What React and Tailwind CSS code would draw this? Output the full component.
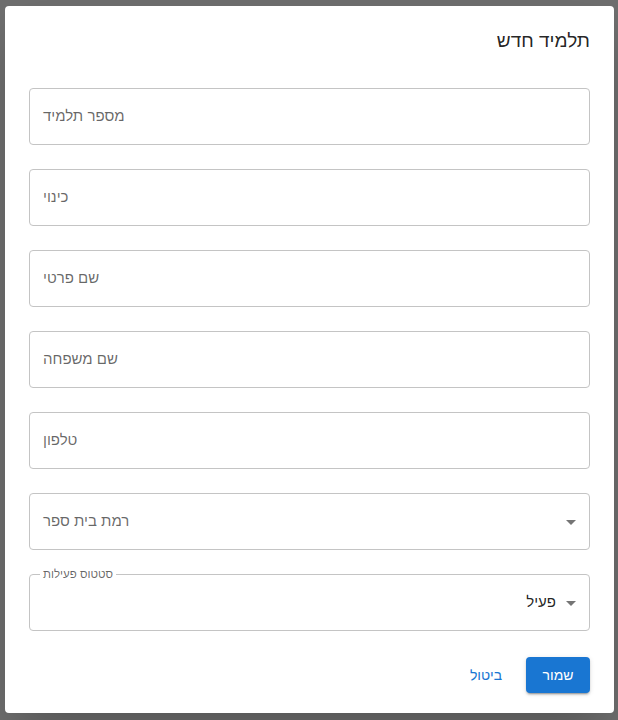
const fields = ['מספר תלמיד', 'כינוי', 'שם פרטי', 'שם משפחה', 'טלפון'];

const Arrow = () => (
  <svg viewBox="0 0 24 24" className="w-6 h-6 -ml-[3px] fill-[#757575]">
    <path d="M7 10l5 5 5-5z" />
  </svg>
);

export default function App() {
  return (
    <div className="h-[720px] bg-[#6e6e6e] pt-[6px] pl-[5px] font-['Liberation_Sans','Arial',sans-serif]">
      <div className="w-[609px] h-[707px] bg-white rounded shadow-2xl flex flex-col">
        {/* Title */}
        <div className="px-6 pt-[19px] h-[64px] flex justify-end">
          <h2 dir="rtl" className="text-[19px] leading-8 font-normal text-black/[0.87]">תלמיד חדש</h2>
        </div>

        {/* Fields */}
        <div className="px-6 pt-[18px] flex flex-col gap-6">
          {fields.map((f) => (
            <div key={f} className="h-[57px] border border-[#c4c4c4] rounded flex items-center px-[13px]">
              <span className="text-[15px] text-black/60">{f}</span>
            </div>
          ))}

          <div className="h-[57px] border border-[#c4c4c4] rounded flex items-center pl-[13px] pr-[6px]">
            <span className="text-[15px] text-black/60 flex-1">רמת בית ספר</span>
            <Arrow />
          </div>

          <div className="relative h-[57px] border border-[#c4c4c4] rounded flex items-center justify-end pl-[13px] pr-[6px]">
            <span className="absolute -top-[8px] left-[10px] bg-white px-[3px] text-[11.5px] leading-[15px] text-black/60">סטטוס פעילות</span>
            <span className="text-[15px] text-black/[0.87] mr-[6px]">פעיל</span>
            <Arrow />
          </div>
        </div>

        {/* Actions */}
        <div className="mt-auto px-6 pb-5 flex justify-end items-center gap-2">
          <button className="min-w-16 h-9 px-2 rounded text-sm font-medium text-[#1976d2]">ביטול</button>
          <button className="min-w-16 h-9 px-4 rounded text-sm font-medium text-white bg-[#1976d2] shadow-[0_3px_1px_-2px_rgba(0,0,0,0.2),0_2px_2px_0_rgba(0,0,0,0.14),0_1px_5px_0_rgba(0,0,0,0.12)]">שמור</button>
        </div>
      </div>
    </div>
  );
}
